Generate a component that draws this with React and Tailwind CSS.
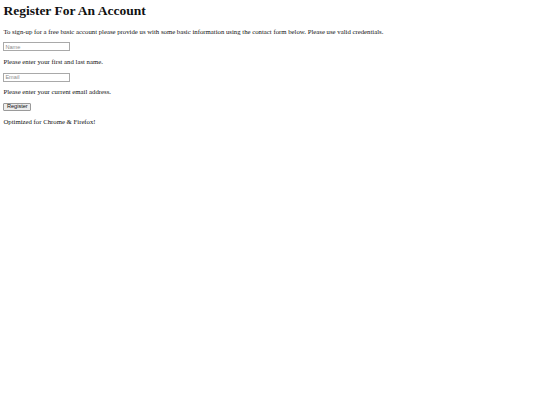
import React from 'react';

export default function App() {
  return (
    <div className="min-h-screen bg-white px-[3.4px] pt-[3.4px] text-[6.75px] leading-[1.15] text-[#111] font-['Liberation_Serif',serif]">
      <h1 className="mb-[9px] text-[13.5px] font-bold leading-[1.15]">Register For An Account</h1>
      <p className="my-[6.75px]">
        To sign-up for a free basic account please provide us with some basic information using the contact form below. Please use valid credentials.
      </p>
      <form>
        <input
          type="text"
          placeholder="Name"
          className="block h-[9px] w-[67px] border-[0.6px] border-[#a9a9a9] px-[1px] text-[5.6px] font-['Liberation_Sans',sans-serif] placeholder:text-[#8c8c8c]"
        />
        <p className="my-[6.75px]">Please enter your first and last name.</p>
        <input
          type="text"
          placeholder="Email"
          className="block h-[9px] w-[67px] border-[0.6px] border-[#a9a9a9] px-[1px] text-[5.6px] font-['Liberation_Sans',sans-serif] placeholder:text-[#8c8c8c]"
        />
        <p className="my-[6.75px]">Please enter your current email address.</p>
        <button
          type="button"
          className="block h-[8px] rounded-[1px] border-[0.6px] border-[#9a9a9a] bg-[#ececec] px-[2.5px] text-[5.6px] leading-none font-['Liberation_Sans',sans-serif]"
        >
          Register
        </button>
        <p className="my-[6.75px]">Optimized for Chrome &amp; Firefox!</p>
      </form>
    </div>
  );
}
